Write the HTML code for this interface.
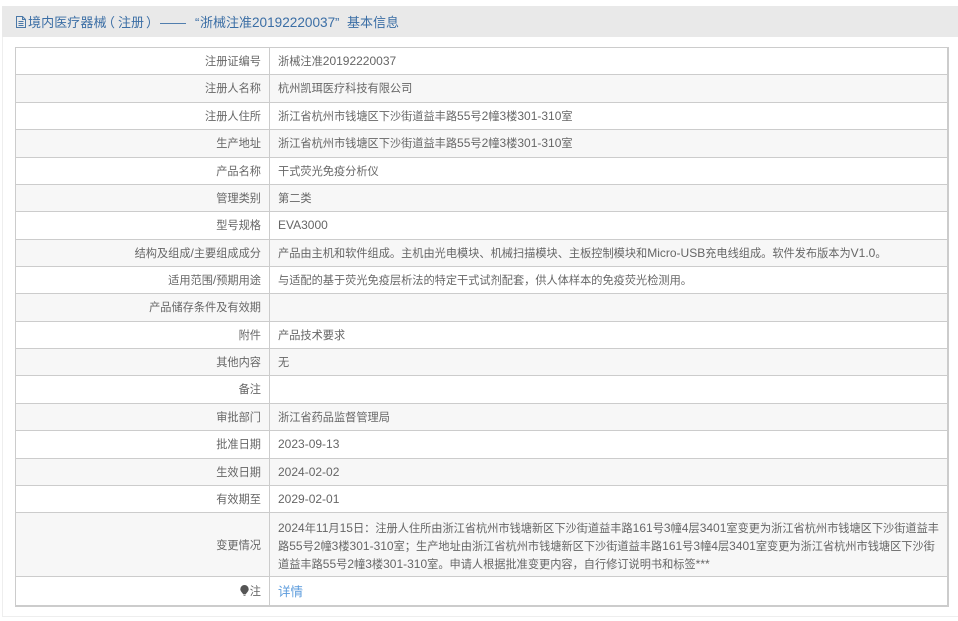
<!DOCTYPE html>
<html lang="zh">
<head>
<meta charset="utf-8">
<style>
html,body{margin:0;padding:0;width:958px;height:621px;overflow:hidden;background:#fff}
body{font-family:"Liberation Sans","Noto Sans CJK SC",sans-serif;color:#666;font-size:11.2px;position:relative;text-spacing-trim:space-all}
.panel{position:absolute;left:2px;top:6px;width:956px;height:611px;border-left:1px solid #eee;border-bottom:1px solid #eee;box-sizing:border-box}
.bar{position:absolute;left:2px;top:6px;width:956px;height:31px;background:#e9e9e9;color:#3b6ea5;font-size:13px;line-height:33px;white-space:nowrap}
.bar svg{position:absolute;left:14px;top:10px}
.bar span{position:absolute;top:0}
.tb{position:absolute;left:15px;top:47px;width:934px;height:560px;border:1px solid #ccc;border-right-width:2px;border-bottom-width:2px;box-sizing:border-box}
.r{position:absolute;left:0;width:931px;border-bottom:1px solid #ccc;box-sizing:border-box}
.r.g{background:#f7f7f7}
.l{position:absolute;left:0;top:1px;bottom:0;width:245px;text-align:right;white-space:nowrap}
.v{position:absolute;left:262px;top:1px;bottom:0;width:664px;white-space:nowrap}
.c{position:absolute;left:253px;top:0;bottom:0;width:1px;background:#ccc}
.v a{color:#5b9bdc;text-decoration:none;font-size:12.5px}
i{font-style:normal;font-size:12px;line-height:1}
b{font-weight:normal;font-family:"Noto Sans CJK TC",sans-serif;line-height:1}
</style>
</head>
<body>
<div class="panel"></div>
<div class="bar">
<svg width="10" height="12" viewBox="0 0 10 12"><path d="M.5.5h6l3 3v8H.5zM6.500.5v3h3M2.500 5.500h5M2.500 7.500h5M2.500 9.500h5" fill="none" stroke="#4a78a8" stroke-width="1"/></svg>
<span style="left:26px;letter-spacing:.1px">境内医疗器械</span>
<span style="left:100px"><b>（</b></span>
<span style="left:116px">注册</span>
<span style="left:144px"><b>）</b></span>
<span style="left:158px;letter-spacing:0">——</span>
<span style="left:193px">“</span>
<span style="left:198px">浙械注准</span>
<span style="left:250px;font-size:13.6px">20192220037</span>
<span style="left:333px">”</span>
<span style="left:345px;letter-spacing:0">基本信息</span>
</div>
<div class="tb">
<div class="r" style="top:0;height:27px;line-height:26px"><div class="l">注册证编号</div><div class="c"></div><div class="v">浙械注准<i>20192220037</i></div></div>
<div class="r g" style="top:27px;height:28px;line-height:27px"><div class="l">注册人名称</div><div class="c"></div><div class="v">杭州凯珥医疗科技有限公司</div></div>
<div class="r" style="top:55px;height:27px;line-height:26px"><div class="l">注册人住所</div><div class="c"></div><div class="v">浙江省杭州市钱塘区下沙街道益丰路<i>55</i>号<i>2</i>幢<i>3</i>楼<i>301-310</i>室</div></div>
<div class="r g" style="top:82px;height:28px;line-height:27px"><div class="l">生产地址</div><div class="c"></div><div class="v">浙江省杭州市钱塘区下沙街道益丰路<i>55</i>号<i>2</i>幢<i>3</i>楼<i>301-310</i>室</div></div>
<div class="r" style="top:110px;height:27px;line-height:26px"><div class="l">产品名称</div><div class="c"></div><div class="v">干式荧光免疫分析仪</div></div>
<div class="r g" style="top:137px;height:27px;line-height:26px"><div class="l">管理类别</div><div class="c"></div><div class="v">第二类</div></div>
<div class="r" style="top:164px;height:28px;line-height:27px"><div class="l">型号规格</div><div class="c"></div><div class="v"><i>EVA3000</i></div></div>
<div class="r g" style="top:192px;height:27px;line-height:26px"><div class="l">结构及组成<i>/</i>主要组成成分</div><div class="c"></div><div class="v">产品由主机和软件组成。主机由光电模块、机械扫描模块、主板控制模块和<i>Micro-USB</i>充电线组成。软件发布版本为<i>V1.0</i>。</div></div>
<div class="r" style="top:219px;height:27px;line-height:26px"><div class="l">适用范围<i>/</i>预期用途</div><div class="c"></div><div class="v">与适配的基于荧光免疫层析法的特定干式试剂配套，供人体样本的免疫荧光检测用。</div></div>
<div class="r g" style="top:246px;height:28px;line-height:27px"><div class="l">产品储存条件及有效期</div><div class="c"></div><div class="v"></div></div>
<div class="r" style="top:274px;height:27px;line-height:26px"><div class="l">附件</div><div class="c"></div><div class="v">产品技术要求</div></div>
<div class="r g" style="top:301px;height:27px;line-height:26px"><div class="l">其他内容</div><div class="c"></div><div class="v">无</div></div>
<div class="r" style="top:328px;height:28px;line-height:27px"><div class="l">备注</div><div class="c"></div><div class="v"></div></div>
<div class="r g" style="top:356px;height:27px;line-height:26px"><div class="l">审批部门</div><div class="c"></div><div class="v">浙江省药品监督管理局</div></div>
<div class="r" style="top:383px;height:28px;line-height:27px"><div class="l">批准日期</div><div class="c"></div><div class="v"><i>2023-09-13</i></div></div>
<div class="r g" style="top:411px;height:27px;line-height:26px"><div class="l">生效日期</div><div class="c"></div><div class="v"><i>2024-02-02</i></div></div>
<div class="r" style="top:438px;height:27px;line-height:26px"><div class="l">有效期至</div><div class="c"></div><div class="v"><i>2029-02-01</i></div></div>
<div class="r g" style="top:465px;height:64px"><div class="l" style="line-height:64px;top:1px">变更情况</div><div class="c"></div><div class="v" style="line-height:18px;top:7px"><i>2024</i>年<i>11</i>月<i>15</i>日<b>：</b>注册人住所由浙江省杭州市钱塘新区下沙街道益丰路<i>161</i>号<i>3</i>幢<i>4</i>层<i>3401</i>室变更为浙江省杭州市钱塘区下沙街道益丰<br>路<i>55</i>号<i>2</i>幢<i>3</i>楼<i>301-310</i>室<b>；</b>生产地址由浙江省杭州市钱塘新区下沙街道益丰路<i>161</i>号<i>3</i>幢<i>4</i>层<i>3401</i>室变更为浙江省杭州市钱塘区下沙街<br>道益丰路<i>55</i>号<i>2</i>幢<i>3</i>楼<i>301-310</i>室。申请人根据批准变更内容，自行修订说明书和标签<i>***</i></div></div>
<div class="r" style="top:529px;height:29px;line-height:28px;border-bottom:0"><div class="l"><svg width="9" height="11" viewBox="0 0 9 11" style="vertical-align:-1px;margin-right:1px"><path d="M4.500 0a4.200 4.200 0 0 1 4.200 4.200c0 2-2.200 3.600-3 5.200h-2.400c-.8-1.600-3-3.200-3-5.200A4.200 4.200 0 0 1 4.500 0z" fill="#555"/><path d="M3.500 10h2v1h-2z" fill="#888"/></svg>注</div><div class="c"></div><div class="v"><a>详情</a></div></div>
</div>
</body>
</html>
